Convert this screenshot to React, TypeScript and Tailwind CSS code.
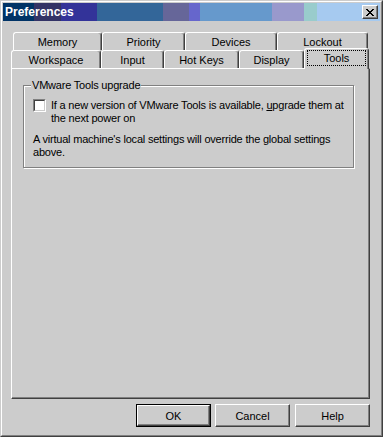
import React from 'react';

const rowOne = [
  { label: 'Memory', w: 'w-[89px]' },
  { label: 'Priority', w: 'w-[83px]' },
  { label: 'Devices', w: 'w-[92px]' },
  { label: 'Lockout', w: 'w-[91px]' },
];

const rowTwo = [
  { label: 'Workspace', w: 'w-[90px]' },
  { label: 'Input', w: 'w-[63px]' },
  { label: 'Hot Keys', w: 'w-[75px]' },
  { label: 'Display', w: 'w-[65px]' },
];

function Tab({ label, w }: { label: string; w: string }) {
  return (
    <div
      className={`${w} flex h-[18px] shrink-0 items-center justify-center rounded-t-[3px] border-l border-r border-t border-l-white border-r-[#404040] border-t-white pt-[1px] shadow-[inset_-1px_0_#808080]`}
    >
      {label}
    </div>
  );
}

function Button({ label, isDefault }: { label: string; isDefault?: boolean }) {
  const bevel = (
    <div className="flex h-full w-full items-center justify-center border border-b-[#404040] border-l-white border-r-[#404040] border-t-white pt-[1px] shadow-[inset_-1px_-1px_#808080]">
      {label}
    </div>
  );
  if (isDefault) {
    return <div className="h-[23px] w-[75px] border border-black">{bevel}</div>;
  }
  return <div className="h-[23px] w-[75px]">{bevel}</div>;
}

function CloseGlyph() {
  const rows = ['XX....XX', '.XX..XX.', '..XXXX..', '...XX...', '..XXXX..', '.XX..XX.', 'XX....XX'];
  return (
    <svg width="8" height="7" viewBox="0 0 8 7" shapeRendering="crispEdges">
      {rows.map((r, y) =>
        r.split('').map((c, x) => (c === 'X' ? <rect key={`${x}-${y}`} x={x} y={y} width="1" height="1" fill="#000" /> : null))
      )}
    </svg>
  );
}

export default function App() {
  return (
    <div
      className="h-[437px] w-[383px] border border-b-[#404040] border-l-[#cccccc] border-r-[#404040] border-t-[#cccccc] bg-[#cccccc] text-[11px] leading-[13px] text-black"
      style={{ fontFamily: '"Liberation Sans", Arial, sans-serif' }}
    >
      <div className="flex h-full flex-col border border-b-[#808080] border-l-white border-r-[#808080] border-t-white p-px">
        {/* Title bar */}
        <div className="flex h-[18px] shrink-0 items-center justify-between bg-[linear-gradient(to_right,#003366_31px,#333366_31px,#333366_58px,#333399_58px,#333399_94px,#336699_94px,#336699_160px,#666699_160px,#666699_186px,#6666cc_186px,#6666cc_197px,#6699cc_197px,#6699cc_269px,#9999cc_269px,#9999cc_301px,#99cccc_301px,#99cccc_314px,#a6caf0_314px)] pl-[2px] pr-[2px]">
          <span className="text-[12px] font-bold leading-[14px] text-white">Preferences</span>
          <div className="flex h-[14px] w-[16px] items-center justify-center border border-b-[#404040] border-l-white border-r-[#404040] border-t-white bg-[#cccccc] shadow-[inset_-1px_-1px_#808080]">
            <CloseGlyph />
          </div>
        </div>

        {/* Tabs */}
        <div className="mt-[11px] ml-[10px] flex">
          {rowOne.map((t) => (
            <Tab key={t.label} label={t.label} w={t.w} />
          ))}
        </div>
        <div className="ml-[8px] flex h-[18px]">
          {rowTwo.map((t) => (
            <Tab key={t.label} label={t.label} w={t.w} />
          ))}
          <div className="relative z-10 -mt-[2px] flex h-[21px] w-[65px] shrink-0 self-start rounded-t-[3px] border-l border-r border-t border-l-white border-r-[#404040] border-t-white bg-[#cccccc] px-[2px] pb-[3px] pt-[1px] shadow-[inset_-1px_0_#808080]">
            <div className="flex flex-1 items-center justify-center border border-dotted border-black">Tools</div>
          </div>
        </div>

        {/* Panel */}
        <div className="ml-[8px] flex h-[331px] w-[359px] flex-col border border-b-[#404040] border-l-white border-r-[#404040] border-t-white shadow-[inset_-1px_-1px_#808080]">
          <fieldset className="ml-[11px] mt-[10px] w-[331px] border border-[#808080] pb-[8px] pl-[9px] tracking-[-0.2px] shadow-[inset_1px_1px_white,1px_1px_white]">
            <legend className="-ml-[2px] bg-[#cccccc] px-[1px] leading-[12px]">VMware Tools upgrade</legend>
            <div className="mt-[8px] flex items-start gap-[5px]">
              <div className="h-[13px] w-[13px] shrink-0 border border-b-white border-l-[#808080] border-r-white border-t-[#808080]">
                <div className="h-full w-full border border-b-[#cccccc] border-l-[#404040] border-r-[#cccccc] border-t-[#404040] bg-white" />
              </div>
              <p className="whitespace-nowrap">
                If a new version of VMware Tools is available, <span className="underline">u</span>pgrade them at
                <br />
                the next power on
              </p>
            </div>
            <p className="mt-[8px] whitespace-nowrap">
              A virtual machine's local settings will override the global settings
              <br />
              above.
            </p>
          </fieldset>
        </div>

        {/* Buttons */}
        <div className="mt-[5px] flex justify-end gap-[4px] pr-[10px]">
          <Button label="OK" isDefault />
          <Button label="Cancel" />
          <div className="ml-px">
            <Button label="Help" />
          </div>
        </div>
      </div>
    </div>
  );
}
